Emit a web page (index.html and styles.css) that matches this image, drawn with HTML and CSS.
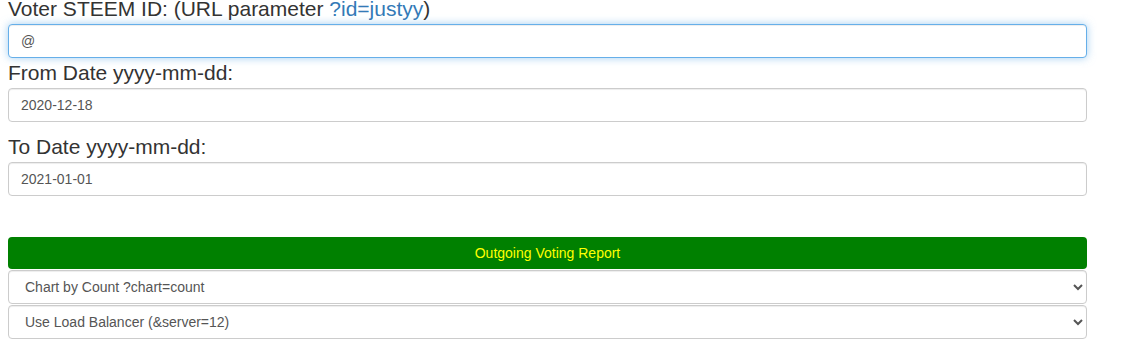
FILE: index.html
```html
<!DOCTYPE html>
<html>
<head>
    <title>Steem Outgoing Voting Report</title>
    <link rel="stylesheet" href="styles.css">
</head>
<body>
    <div class="container">
        <label for="voter" class="first">Voter STEEM ID: (URL parameter <a href="?id=justyy">?id=justyy</a>)</label>
        <input type="text" id="voter" class="form-control focused" value="@">
        <label for="from">From Date yyyy-mm-dd:</label>
        <input type="text" id="from" class="form-control" value="2020-12-18">
        <label for="to" class="spaced">To Date yyyy-mm-dd:</label>
        <input type="text" id="to" class="form-control" value="2021-01-01">

        <button class="btn-report">Outgoing Voting Report</button>
        <select id="chart" class="form-control select">
            <option>Chart by Count ?chart=count</option>
            <option>Chart by Weight ?chart=weight</option>
        </select>
        <select id="server" class="form-control select">
            <option>Use Load Balancer (&amp;server=12)</option>
        </select>
    </div>
</body>
</html>
```

FILE: styles.css
```css
body {
    margin: 0;
    font-family: "Liberation Sans", Arial, sans-serif;
    font-size: 14px;
    color: #333;
    background-color: #fff;
}
.container {
    width: 1079px;
    margin-left: 8px;
}
label {
    display: block;
    font-size: 21px;
    line-height: 30px;
    height: 30px;
    white-space: nowrap;
}
label.first {
    margin-top: -6px;
}
label.spaced {
    margin-top: 10px;
}
a {
    color: #337ab7;
    text-decoration: none;
}
.form-control {
    display: block;
    box-sizing: border-box;
    width: 100%;
    height: 34px;
    padding: 6px 12px;
    font-family: "Liberation Sans", Arial, sans-serif;
    font-size: 14px;
    color: #555;
    background-color: #fff;
    border: 1px solid #ccc;
    border-radius: 4px;
    box-shadow: inset 0 1px 1px rgba(0, 0, 0, 0.075);
    margin: 0;
}
.focused {
    border-color: #66afe9;
    outline: 0;
    box-shadow: inset 0 1px 1px rgba(0, 0, 0, .075), 0 0 8px rgba(102, 175, 233, 0.6);
}
.btn-report {
    display: block;
    width: 100%;
    height: 32px;
    margin-top: 41px;
    margin-bottom: 1px;
    padding: 0;
    font-family: "Liberation Sans", Arial, sans-serif;
    font-size: 14px;
    color: #ffff00;
    background-color: #008000;
    border: none;
    border-radius: 4px;
}
.select {
    padding-left: 12px;
    margin-bottom: 1px;
}
```
